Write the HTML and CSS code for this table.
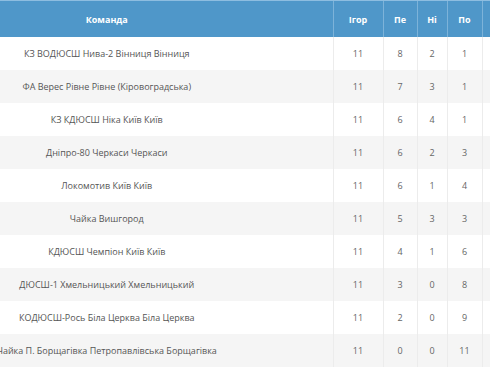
FILE: index.html
```html
<!DOCTYPE html>
<html lang="uk">
<head>
<meta charset="utf-8">
<link rel="stylesheet" href="styles.css">
</head>
<body>
<div class="scroller">
<table class="standings">
<colgroup>
<col class="c-team"><col class="c-g"><col class="c-w"><col class="c-d"><col class="c-l"><col class="c-x">
</colgroup>
<thead>
<tr><th>Команда</th><th>Ігор</th><th>Пе</th><th>Ні</th><th>По</th><th></th></tr>
</thead>
<tbody>
<tr><td>КЗ ВОДЮСШ Нива-2 Вінниця Вінниця</td><td>11</td><td>8</td><td>2</td><td>1</td><td></td></tr>
<tr><td>ФА Верес Рівне Рівне (Кіровоградська)</td><td>11</td><td>7</td><td>3</td><td>1</td><td></td></tr>
<tr><td>КЗ КДЮСШ Ніка Київ Київ</td><td>11</td><td>6</td><td>4</td><td>1</td><td></td></tr>
<tr><td>Дніпро-80 Черкаси Черкаси</td><td>11</td><td>6</td><td>2</td><td>3</td><td></td></tr>
<tr><td>Локомотив Київ Київ</td><td>11</td><td>6</td><td>1</td><td>4</td><td></td></tr>
<tr><td>Чайка Вишгород</td><td>11</td><td>5</td><td>3</td><td>3</td><td></td></tr>
<tr><td>КДЮСШ Чемпіон Київ Київ</td><td>11</td><td>4</td><td>1</td><td>6</td><td></td></tr>
<tr><td>ДЮСШ-1 Хмельницький Хмельницький</td><td>11</td><td>3</td><td>0</td><td>8</td><td></td></tr>
<tr><td>КОДЮСШ-Рось Біла Церква Біла Церква</td><td>11</td><td>2</td><td>0</td><td>9</td><td></td></tr>
<tr><td>Чайка П. Борщагівка Петропавлівська Борщагівка</td><td>11</td><td>0</td><td>0</td><td>11</td><td></td></tr>
</tbody>
</table>
</div>
</body>
</html>
```
FILE: styles.css
```css
html, body {
  margin: 0;
  padding: 0;
  background: #ffffff;
}
.scroller {
  width: 490px;
  height: 368px;
  overflow: hidden;
}
.standings {
  margin-left: -119px;
  border-collapse: collapse;
  table-layout: fixed;
  width: 609px;
  font-family: "Open Sans", "Noto Sans", sans-serif;
  font-size: 9px;
  color: #555555;
}
.c-team { width: 452px; }
.c-g { width: 50px; }
.c-w { width: 34px; }
.c-d { width: 30px; }
.c-l { width: 35px; }
.c-x { width: 8px; }
.standings th {
  height: 36px;
  padding: 0;
  background: #4f97c9;
  color: #ffffff;
  font-weight: 700;
  text-align: center;
  border-left: 1px solid #7db3d9;
  border-top: 1px solid #8dbde0;
  white-space: nowrap;
}
.standings th:first-child { border-left: none; }
.standings td {
  height: 32px;
  padding: 0 0 1px;
  text-align: center;
  border-left: 1px solid #ececec;
  white-space: nowrap;
  color: #666666;
}
.standings td:first-child {
  border-left: none;
  color: #555555;
  overflow: visible;
}
.standings tbody tr:nth-child(even) td {
  background: #f5f5f5;
}
```
